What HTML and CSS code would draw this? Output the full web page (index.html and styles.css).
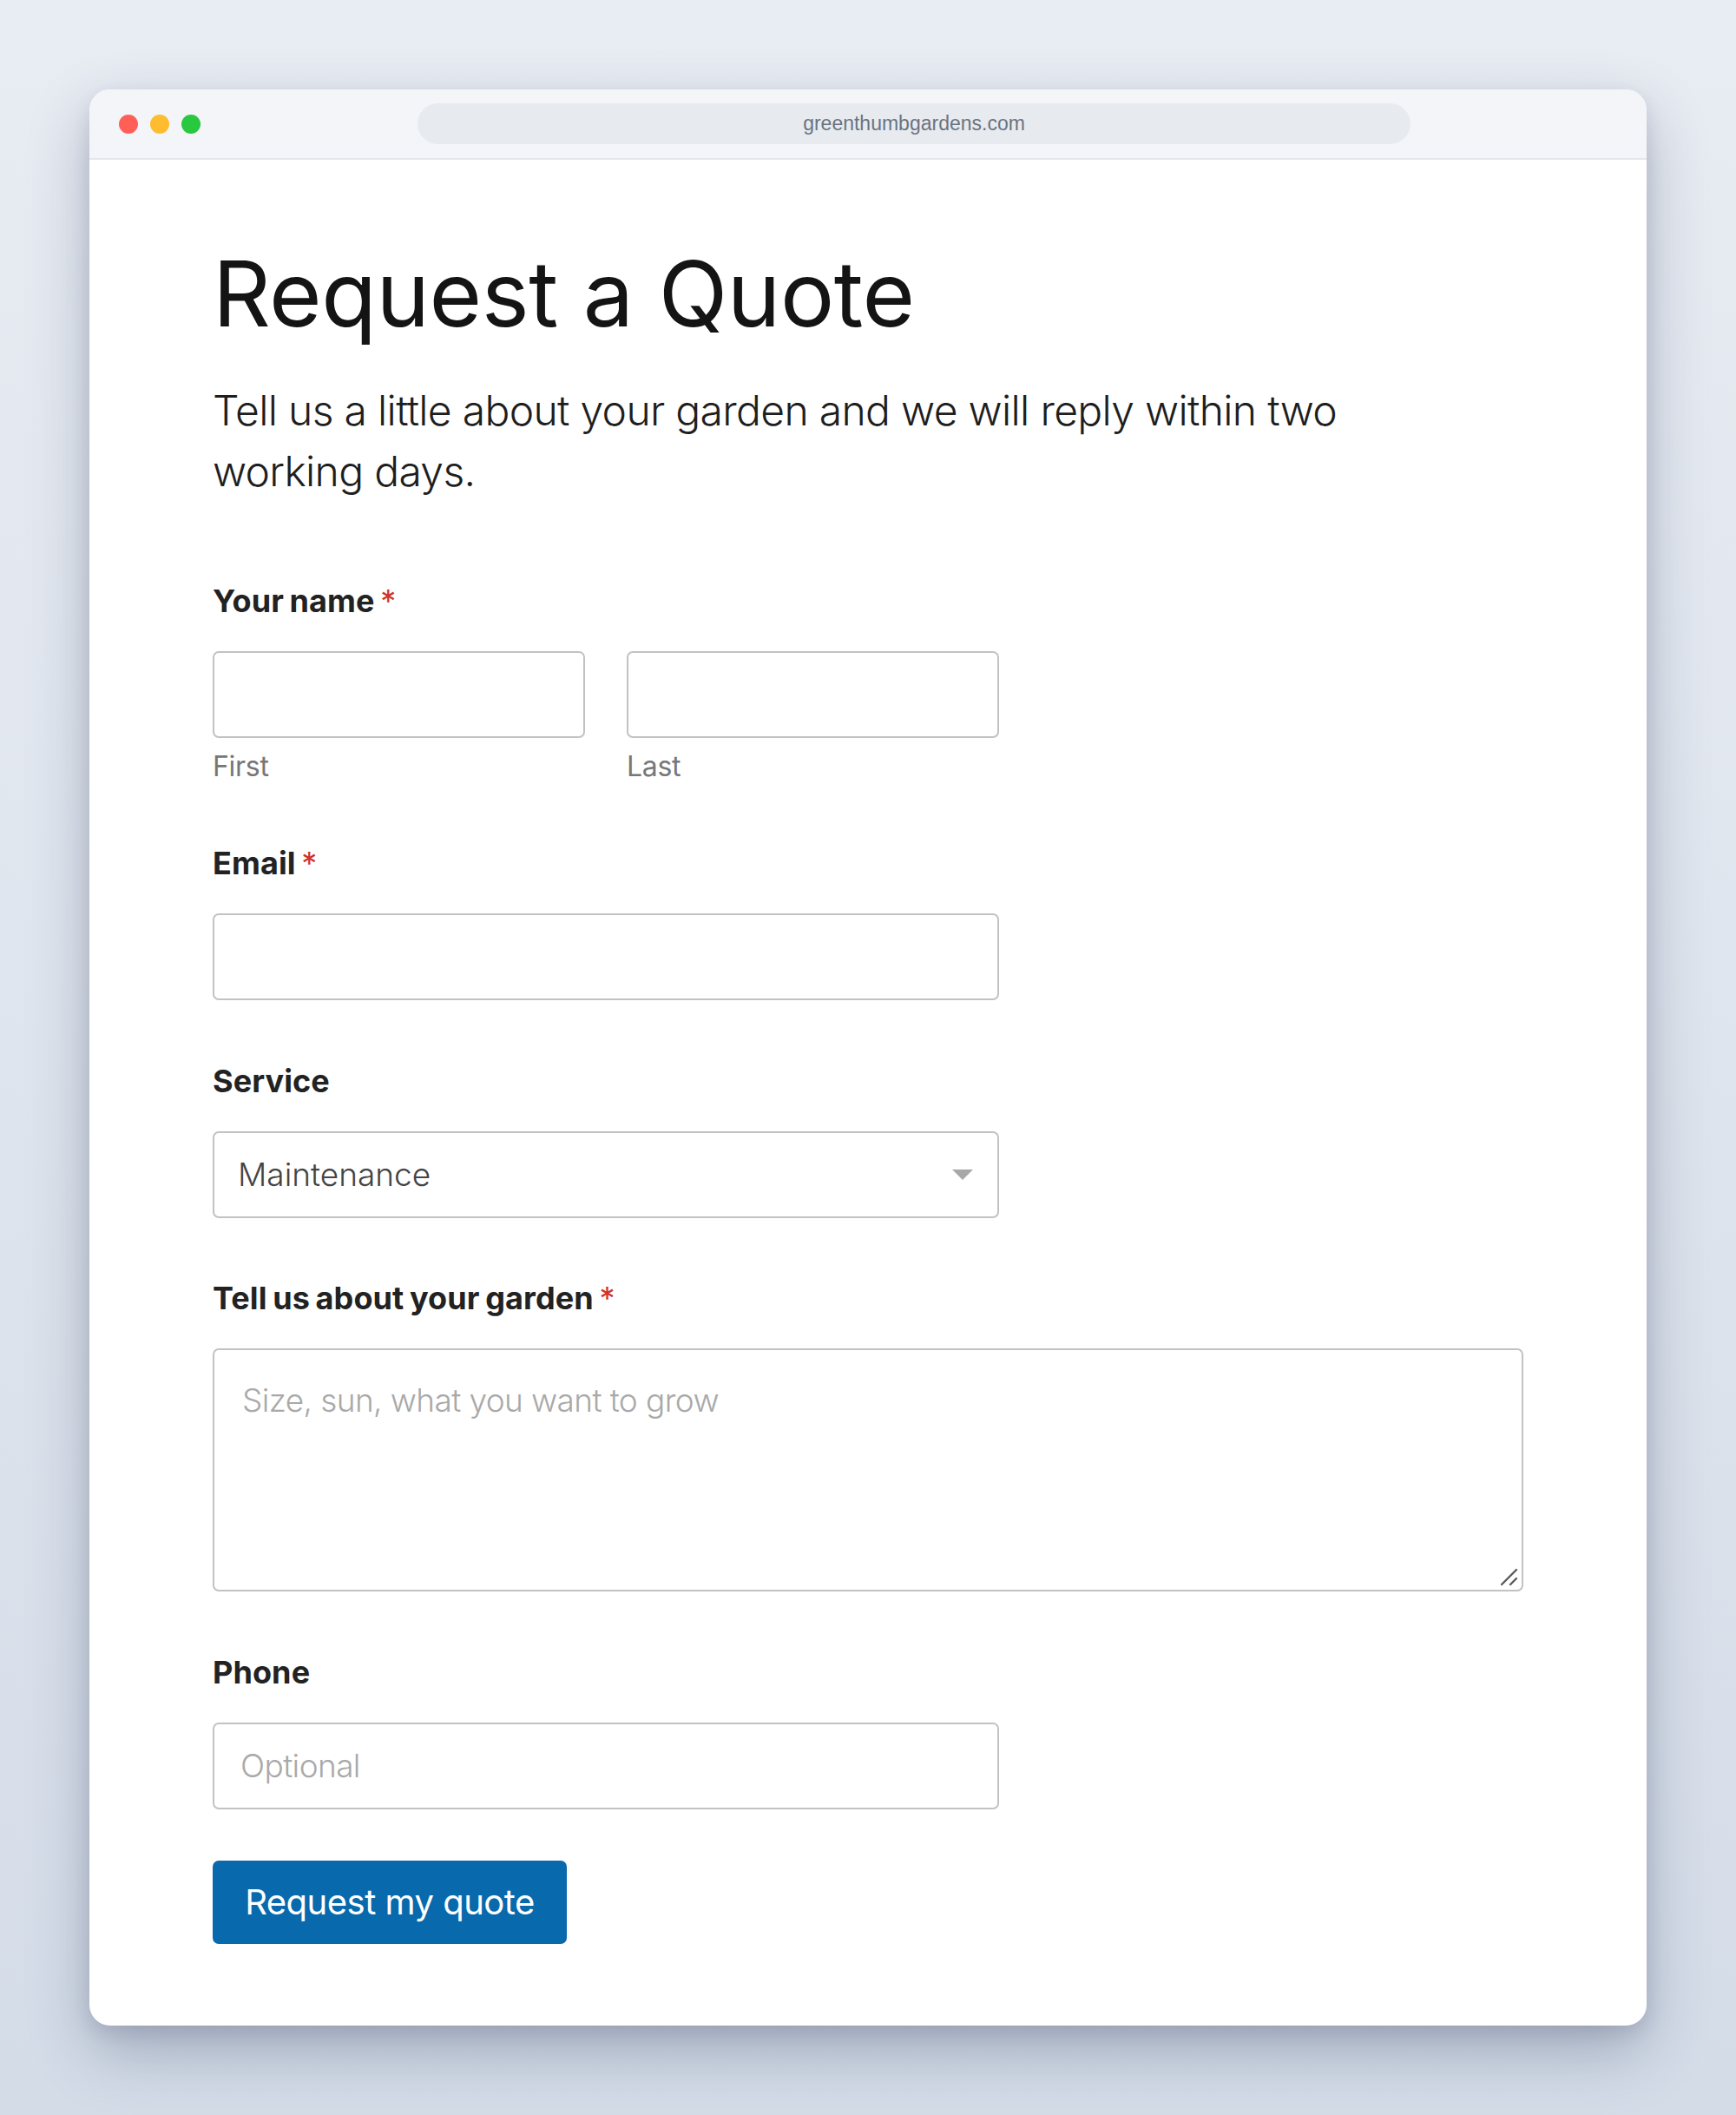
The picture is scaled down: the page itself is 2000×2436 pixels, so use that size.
FILE: index.html
```html
<!DOCTYPE html>
<html lang="en">
<head>
<meta charset="utf-8">
<title>Request a Quote</title>
<link rel="stylesheet" href="styles.css">
</head>
<body>
<div class="window">
  <div class="titlebar">
    <div class="lights">
      <span class="light red"></span>
      <span class="light yellow"></span>
      <span class="light green"></span>
    </div>
    <div class="url">greenthumbgardens.com</div>
    <div class="spacer"></div>
  </div>
  <main class="content">
    <h1 class="title">Request a Quote</h1>
    <p class="intro">Tell us a little about your garden and we will reply within two working days.</p>
    <form class="form">
      <div class="group">
        <div class="label">Your name <span class="req">*</span></div>
        <div class="name-row">
          <div class="name-col">
            <input class="field" type="text" aria-label="First">
            <div class="sublabel">First</div>
          </div>
          <div class="name-col">
            <input class="field" type="text" aria-label="Last">
            <div class="sublabel">Last</div>
          </div>
        </div>
      </div>
      <div class="group">
        <label class="label">Email <span class="req">*</span></label>
        <input class="field medium" type="email">
      </div>
      <div class="group">
        <label class="label">Service</label>
        <div class="select-wrap medium">
          <select class="field select">
            <option>Maintenance</option>
            <option>Design</option>
            <option>Planting</option>
          </select>
          <svg class="caret" width="24" height="12" viewBox="0 0 24 12"><path d="M0 0 H24 L12 12 Z" fill="#a8a8a8"/></svg>
        </div>
      </div>
      <div class="group">
        <label class="label">Tell us about your garden <span class="req">*</span></label>
        <div class="area-wrap">
          <textarea class="field area" placeholder="Size, sun, what you want to grow"></textarea>
          <svg class="grip" width="24" height="24" viewBox="0 0 24 24"><path d="M2 20 L19 3 M12 20 L19 13" stroke="#5a5a5a" stroke-width="2.4" stroke-linecap="round" fill="none"/></svg>
        </div>
      </div>
      <div class="group">
        <label class="label">Phone</label>
        <input class="field medium" type="tel" placeholder="Optional">
      </div>
      <button class="submit" type="button">Request my quote</button>
    </form>
  </main>
</div>
</body>
</html>
```

FILE: styles.css
```css
html, body {
  margin: 0;
  padding: 0;
}
body {
  min-height: 2436px;
  box-sizing: border-box;
  padding: 103px 103px 0;
  background: linear-gradient(180deg, #e8ecf3 0%, #dfe5ee 50%, #d4dce8 100%);
  font-family: Inter, "Noto Sans", sans-serif;
}
.window {
  width: 1794px;
  background: #ffffff;
  border-radius: 24px;
  overflow: hidden;
  box-shadow: 0 30px 70px rgba(40, 52, 85, 0.30), 0 8px 20px rgba(40, 52, 85, 0.12);
}
.titlebar {
  height: 79px;
  background: #f3f5f8;
  border-bottom: 2px solid #e2e6ec;
  display: flex;
  align-items: center;
  padding: 0 34px;
}
.lights {
  display: flex;
  gap: 14px;
  width: 344px;
}
.light {
  width: 22px;
  height: 22px;
  border-radius: 50%;
}
.red { background: #ff5f57; }
.yellow { background: #febc2e; }
.green { background: #28c840; }
.url {
  width: 1144px;
  height: 47px;
  border-radius: 24px;
  background: #e7ebf0;
  display: flex;
  align-items: center;
  justify-content: center;
  font-family: "Liberation Sans", Arial, sans-serif;
  font-size: 23px;
  color: #6b7380;
}
.spacer { flex: 1; }
.content {
  padding: 92px 142px 94px;
}
.title {
  margin: 0;
  font-size: 104px;
  line-height: 1.2;
  font-weight: 400;
  color: #141414;
  letter-spacing: -0.4px;
}
.intro {
  margin: 37px 0 93px;
  max-width: 1330px;
  font-size: 48px;
  line-height: 70px;
  font-weight: 300;
  color: #1e1e1e;
  letter-spacing: -0.68px;
}
.form {
  display: flex;
  flex-direction: column;
  align-items: flex-start;
}
.group {
  display: flex;
  flex-direction: column;
  align-items: stretch;
  width: 100%;
  margin-bottom: 71.5px;
}
.label {
  display: block;
  font-size: 36px;
  line-height: 43px;
  font-weight: 700;
  color: #222222;
  letter-spacing: 0.1px;
  word-spacing: -2px;
  margin-bottom: 36px;
}
.req {
  color: #d0342c;
  font-weight: 400;
}
.name-row {
  display: flex;
  gap: 48px;
  width: 906px;
}
.name-col {
  flex: 1;
  display: flex;
  flex-direction: column;
}
.sublabel {
  margin-top: 14px;
  font-size: 32px;
  line-height: 38px;
  color: #777777;
  letter-spacing: -0.3px;
}
.field {
  box-sizing: border-box;
  height: 100px;
  width: 100%;
  border: 2px solid #c2c2c2;
  border-radius: 7px;
  background: #ffffff;
  font-family: Inter, "Noto Sans", sans-serif;
  font-size: 37px;
  color: #444444;
  padding: 0 30px;
  margin: 0;
  outline: none;
}
.field::placeholder {
  color: #a9a9a9;
  font-weight: 300;
  letter-spacing: -0.6px;
}
.medium {
  width: 906px;
}
.select-wrap {
  position: relative;
}
.select {
  -webkit-appearance: none;
  appearance: none;
  padding-left: 27px;
  font-weight: 300;
}
.caret {
  position: absolute;
  right: 30px;
  top: 44px;
}
.area-wrap {
  position: relative;
}
.area {
  height: 280px;
  padding: 36px 32px;
  line-height: 44px;
  resize: none;
  display: block;
}
.grip {
  position: absolute;
  right: 3px;
  bottom: 4px;
  pointer-events: none;
}
.group:last-of-type {
  margin-bottom: 59px;
}
.submit {
  height: 96px;
  width: 408px;
  border: none;
  border-radius: 7px;
  background: #0869ac;
  color: #ffffff;
  font-family: Inter, "Noto Sans", sans-serif;
  font-size: 40px;
  font-weight: 400;
  letter-spacing: -0.5px;
  padding: 0;
}
```
